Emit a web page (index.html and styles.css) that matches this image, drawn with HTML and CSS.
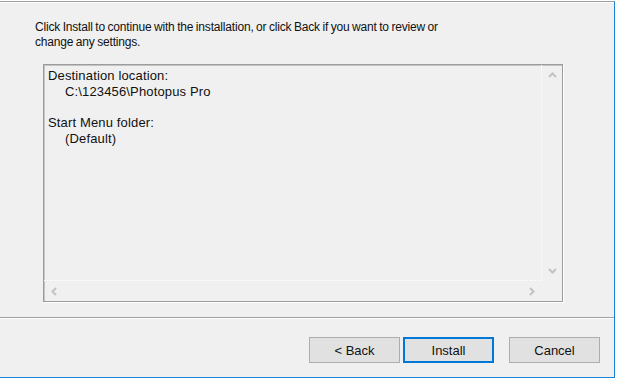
FILE: index.html
```html
<!DOCTYPE html>
<html lang="en">
<head>
  <meta charset="UTF-8" />
  <meta name="viewport" content="width=device-width, initial-scale=1.0"/>
  <title>Setup - Ready to Install</title>
  <link rel="stylesheet" href="styles.css">
</head>
<body>
  <div class="window">
    <div class="page">
      <p class="intro">Click Install to continue with the installation, or click Back if you want to review or<br>change any settings.</p>

      <div class="memo">
        <div class="memo-text">
          <div>Destination location:</div>
          <div class="indent">C:\123456\Photopus Pro</div>
          <div class="blank"></div>
          <div>Start Menu folder:</div>
          <div class="indent">(Default)</div>
        </div>
        <div class="vscroll">
          <span class="arrow">
            <svg width="9" height="6" viewBox="0 0 9 6"><polyline points="1,5 4.5,1.5 8,5" /></svg>
          </span>
          <span class="arrow">
            <svg width="9" height="6" viewBox="0 0 9 6"><polyline points="1,1 4.5,4.5 8,1" /></svg>
          </span>
        </div>
        <div class="hscroll">
          <span class="arrow">
            <svg width="6" height="9" viewBox="0 0 6 9"><polyline points="5,1 1.5,4.5 5,8" /></svg>
          </span>
          <span class="arrow">
            <svg width="6" height="9" viewBox="0 0 6 9"><polyline points="1,1 4.5,4.5 1,8" /></svg>
          </span>
        </div>
        <div class="corner"></div>
      </div>
    </div>

    <div class="bevel"></div>

    <div class="buttons">
      <button class="btn">&lt; Back</button>
      <button class="btn default">Install</button>
      <button class="btn cancel">Cancel</button>
    </div>
  </div>
</body>
</html>
```

FILE: styles.css
```css
body {
  margin: 0;
  padding-top: 1px;
  width: 618px;
  height: 379px;
  background: #ffffff;
  font-family: "Liberation Sans", Arial, sans-serif;
  font-size: 13px;
  color: #111;
}

.window {
  box-sizing: border-box;
  width: 615px;
  height: 377px;
  background: #f0f0f0;
  border-top: 1px solid #a0a0a0;
  border-right: 1px solid #1883d7;
  border-bottom: 1px solid #1883d7;
  box-shadow: inset 0 1px #ffffff;
  display: flex;
  flex-direction: column;
}

.page {
  padding: 18px 0 0 35px;
}

.intro {
  margin: 0;
  font-size: 12px;
  line-height: 15px;
  letter-spacing: -0.18px;
  word-spacing: -0.6px;
  white-space: nowrap;
}

.memo {
  box-sizing: border-box;
  margin: 14px 0 0 8px;
  width: 520px;
  height: 238px;
  border: 1px solid #9c9c9c;
  box-shadow: 1px 1px #ffffff, inset 1px 1px #c4c4c4;
  display: grid;
  grid-template-columns: 1fr 20px;
  grid-template-rows: 1fr 20px;
}

.memo-text {
  padding: 3px 0 0 4px;
  line-height: 15.5px;
  letter-spacing: 0.15px;
  border-right: 1px dotted #ffffff;
  border-bottom: 1px dotted #ffffff;
}

.memo-text .indent {
  padding-left: 17px;
}

.memo-text .blank {
  height: 16px;
}

.vscroll {
  display: flex;
  flex-direction: column;
  justify-content: space-between;
}

.hscroll {
  display: flex;
  justify-content: space-between;
}

.arrow {
  width: 20px;
  height: 20px;
  display: flex;
  align-items: center;
  justify-content: center;
}

.arrow svg polyline {
  fill: none;
  stroke: #c2c2c2;
  stroke-width: 2;
}

.bevel {
  margin-top: 15px;
  height: 1px;
  border-top: 1px solid #a0a0a0;
  background: #ffffff;
}

.buttons {
  display: flex;
  justify-content: flex-end;
  padding: 18px 14px 0 0;
}

.btn {
  box-sizing: border-box;
  width: 91px;
  height: 26px;
  margin-left: 3px;
  background: #e1e1e1;
  border: 1px solid #adadad;
  font-family: "Liberation Sans", Arial, sans-serif;
  font-size: 13px;
  color: #111;
  padding: 0;
}

.btn.default {
  border: 2px solid #0078d7;
}

.btn.cancel {
  margin-left: 15px;
}
```
